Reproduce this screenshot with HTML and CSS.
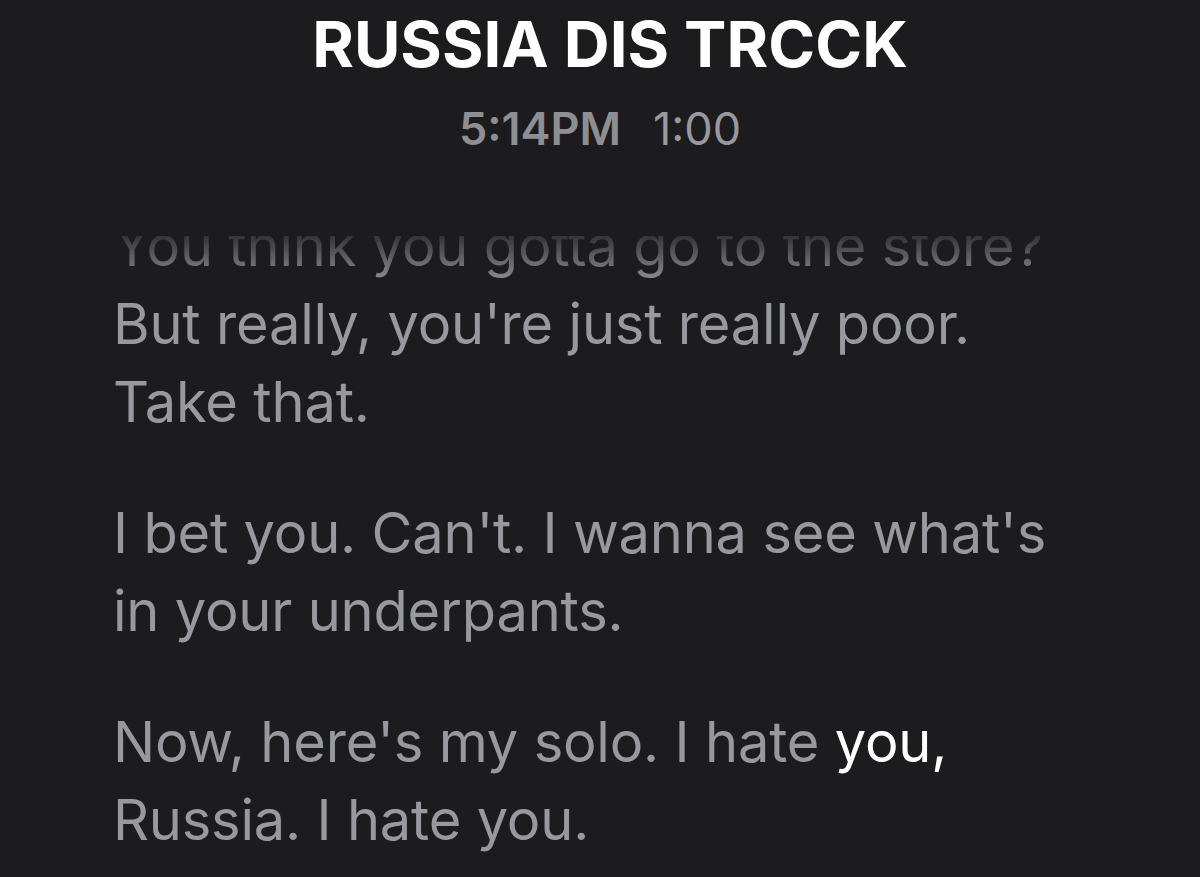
FILE: index.html
```html
<!DOCTYPE html>
<html lang="en">
<head>
  <meta charset="UTF-8">
  <meta name="viewport" content="width=device-width, initial-scale=1.0">
  <title>Russia Dis Trcck</title>
  <link rel="stylesheet" href="styles.css">
</head>
<body>

  <div class="memo">
    <header class="memo-header">
      <h1 class="memo-title">RUSSIA DIS TRCCK</h1>
      <div class="memo-meta">
        <span class="memo-time">5:14PM</span>
        <span class="memo-length">1:00</span>
      </div>
    </header>

    <div class="transcript">
      <div class="transcript-body">
        <p>You think you gotta go to the store?<br>But really, you're just really poor.<br>Take that.</p>
        <p>I bet you. Can't. I wanna see what's<br>in your underpants.</p>
        <p>Now, here's my solo. I hate <span class="current">you,</span><br>Russia. I hate you.</p>
      </div>
    </div>
  </div>

</body>
</html>
```

FILE: styles.css
```css
body {
  margin: 0;
  padding: 0;
  background-color: #1c1c1e;
  font-family: 'Inter', 'Roboto', sans-serif;
  height: 100vh;
  overflow: hidden;
}
.memo {
  display: flex;
  flex-direction: column;
  height: 100%;
}
.memo-header {
  text-align: center;
  padding-top: 8px;
}
.memo-title {
  margin: 0;
  padding-left: 20px;
  color: #ffffff;
  font-size: 63.5px;
  font-weight: 700;
  line-height: 72px;
}
.memo-meta {
  margin-top: 24px;
  font-size: 45px;
  line-height: 50px;
  color: #8e8e93;
  display: flex;
  justify-content: center;
  gap: 32px;
}
.memo-time {
  font-weight: 600;
}
.memo-length {
  font-weight: 400;
  color: #98989d;
}
.transcript {
  margin-top: 82px;
  flex: 1;
  overflow: hidden;
  -webkit-mask-image: linear-gradient(to bottom, rgba(0,0,0,0.2) 0, #000 50px);
  mask-image: linear-gradient(to bottom, rgba(0,0,0,0.2) 0, #000 50px);
}
.transcript-body {
  margin-top: -29px;
  padding-left: 113px;
  color: #98989f;
  font-size: 56px;
  line-height: 78px;
  letter-spacing: -0.2px;
}
.transcript-body p {
  margin: 0 0 53px;
}
.current {
  color: #ffffff;
}
```
